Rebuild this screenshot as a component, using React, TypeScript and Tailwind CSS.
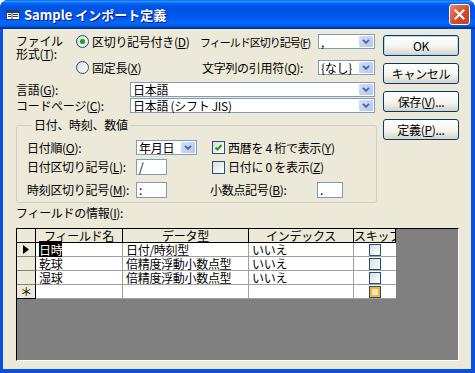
import React from "react";

// XP 風のコントロール
function Radio({ checked }: { checked?: boolean }) {
  return (
    <span className="w-[13px] h-[13px] shrink-0 rounded-full border border-[#1C5180] bg-[linear-gradient(135deg,#DCDCD7,#FFFFFF)] flex items-center justify-center">
      {checked && <span className="w-[5px] h-[5px] rounded-full bg-[#21A121] shadow-[0_0_1px_#7DD67D]" />}
    </span>
  );
}

function Check({ checked }: { checked?: boolean }) {
  return (
    <span className="w-[13px] h-[13px] shrink-0 border border-[#1C5180] bg-[linear-gradient(135deg,#DCDCD7,#FFFFFF)] flex items-center justify-center">
      {checked && (
        <svg width="9" height="9" viewBox="0 0 9 9">
          <polyline points="1.5,4.5 3.5,6.5 7.5,2" fill="none" stroke="#21A121" strokeWidth="2" />
        </svg>
      )}
    </span>
  );
}

function Combo({ className, value }: { className: string; value: string }) {
  return (
    <div className={`${className} h-[15px] shrink-0 border border-[#7F9DB9] bg-white flex items-stretch`}>
      <span className="flex-1 min-w-0 pl-[2px] leading-[13px] whitespace-nowrap">{value}</span>
      <span className="m-[1px] w-[14px] shrink-0 rounded-[1px] bg-[linear-gradient(135deg,#D2DEFC,#B2C6F7)] flex items-center justify-center">
        <svg width="8" height="5" viewBox="0 0 8 5">
          <polyline points="1,0.8 4,3.8 7,0.8" fill="none" stroke="#4D6185" strokeWidth="1.8" />
        </svg>
      </span>
    </div>
  );
}

function Field({ className, value }: { className: string; value: string }) {
  return (
    <div className={`${className} h-[16px] shrink-0 border border-[#7F9DB9] bg-white pl-[2px] leading-[14px]`}>
      {value}
    </div>
  );
}

function Btn({ children, def }: { children: React.ReactNode; def?: boolean }) {
  return (
    <div
      className={`h-[21px] w-[76px] rounded-[3px] border border-[#003C74] bg-[linear-gradient(to_bottom,#FFFFFF,#F4F4F0_55%,#D8D2C6)] flex items-center justify-center leading-[14px] ${
        def ? "shadow-[inset_0_0_0_1px_#BCD4F6]" : ""
      }`}
    >
      {children}
    </div>
  );
}

function SkipBox({ active }: { active?: boolean }) {
  return (
    <span className="w-[12px] h-[12px] border border-[#1C5180] bg-[linear-gradient(135deg,#DCDCD7,#FFFFFF)] flex items-center justify-center">
      {active && <span className="w-[10px] h-[10px] border-2 border-[#F4B23B] bg-[#FCE9B9]" />}
    </span>
  );
}

const rows = [
  { name: "日時", type: "日付/時刻型", idx: "いいえ", current: true },
  { name: "乾球", type: "倍精度浮動小数点型", idx: "いいえ" },
  { name: "湿球", type: "倍精度浮動小数点型", idx: "いいえ" },
];

export default function App() {
  return (
    <div className="w-[475px] h-[373px] flex flex-col rounded-t-[8px] overflow-hidden bg-[#0A50DD] text-black text-[12px] leading-[14px] tracking-[-0.3px] font-['Noto_Sans_CJK_JP','Noto_Sans',sans-serif]">
      {/* タイトルバー */}
      <div className="h-[29px] shrink-0 flex items-center bg-[linear-gradient(to_bottom,#0058EE_0%,#3A93FF_4%,#288EFF_6%,#127DFF_8%,#036FFC_10%,#0262EE_14%,#0057E5_20%,#0054E3_24%,#0055EB_56%,#005BF5_66%,#026AFE_76%,#0062EF_86%,#0052D6_92%,#0040AB_94%,#003092_100%)]">
        <svg className="ml-[6px]" width="14" height="10" viewBox="0 0 14 10">
          <rect x="0.5" y="0.5" width="13" height="9" fill="#FFFFFF" stroke="#2A3E6E" />
          <rect x="1" y="1" width="12" height="2" fill="#2A3E6E" />
          <line x1="2" y1="4.5" x2="5" y2="4.5" stroke="#2A3E6E" />
          <line x1="2" y1="6.5" x2="5" y2="6.5" stroke="#2A3E6E" />
          <line x1="7" y1="4.5" x2="12" y2="4.5" stroke="#2A3E6E" />
          <line x1="7" y1="6.5" x2="12" y2="6.5" stroke="#2A3E6E" />
          <line x1="6" y1="3" x2="6" y2="9" stroke="#2A3E6E" />
        </svg>
        <span className="ml-[4px] text-white font-bold text-[13px] leading-[16px] tracking-[0px] [text-shadow:1px_1px_0_#0A1883]">
          Sample インポート定義
        </span>
        <div className="ml-auto mr-[5px] w-[21px] h-[21px] rounded-[3px] border border-white bg-[linear-gradient(135deg,#E8876A,#D24A22_60%,#C1401F)] flex items-center justify-center">
          <svg width="11" height="11" viewBox="0 0 11 11">
            <path d="M1.5 1.5 L9.5 9.5 M9.5 1.5 L1.5 9.5" stroke="#FFFFFF" strokeWidth="2" strokeLinecap="square" />
          </svg>
        </div>
      </div>

      {/* クライアント領域 */}
      <div className="ml-[3px] mr-[4px] h-[340px] shrink-0 bg-[#ECE9D8] flex flex-col pl-[13px] pt-[5px]">
        <div className="flex items-start">
          <div className="w-[361px] flex flex-col">
            <div className="flex">
              <div className="w-[60px] flex flex-col">
                <div className="h-[13px] leading-[13px]">ファイル</div>
                <div className="h-[13px] leading-[13px]">
                  形式(<u>T</u>):
                </div>
              </div>
              <div className="flex flex-col">
                <div className="flex items-center h-[15px]">
                  <div className="w-[124px] flex items-center">
                    <Radio checked />
                    <span className="ml-[3px]">
                      区切り記号付き(<u>D</u>)
                    </span>
                  </div>
                  <div className="w-[118px] whitespace-nowrap text-[11px] tracking-[-1px]">
                    フィールド区切り記号(<u>F</u>)
                  </div>
                  <Combo className="w-[57px]" value="," />
                </div>
                <div className="flex items-center h-[15px] mt-[11px]">
                  <div className="w-[124px] flex items-center">
                    <Radio />
                    <span className="ml-[3px]">
                      固定長(<u>X</u>)
                    </span>
                  </div>
                  <div className="w-[118px] pl-[2px] whitespace-nowrap">
                    文字列の引用符(<u>Q</u>):
                  </div>
                  <Combo className="w-[57px]" value="{なし}" />
                </div>
              </div>
            </div>

            <div className="flex items-center h-[15px] mt-[7px]">
              <div className="w-[114px]">
                言語(<u>G</u>):
              </div>
              <Combo className="w-[245px]" value="日本語" />
            </div>
            <div className="flex items-center h-[15px] mt-[1px]">
              <div className="w-[114px]">
                コードページ(<u>C</u>):
              </div>
              <Combo className="w-[245px]" value="日本語 (シフト JIS)" />
            </div>

            <fieldset className="mt-[6px] border border-[#D0D0BF] rounded-[3px] pl-[10px] pb-[4px]">
              <legend className="ml-[5px] px-[2px] leading-[12px]">日付、時刻、数値</legend>
              <div className="flex items-center h-[15px] mt-[9px]">
                <div className="w-[109px]">
                  日付順(<u>O</u>):
                </div>
                <Combo className="w-[61px]" value="年月日" />
                <span className="ml-[15px]">
                  <Check checked />
                </span>
                <span className="ml-[3px]">
                  西暦を 4 桁で表示(<u>Y</u>)
                </span>
              </div>
              <div className="flex items-center h-[16px] mt-[4px]">
                <div className="w-[109px]">
                  日付区切り記号(<u>L</u>):
                </div>
                <Field className="w-[31px]" value="/" />
                <span className="ml-[45px]">
                  <Check />
                </span>
                <span className="ml-[3px]">
                  日付に 0 を表示(<u>Z</u>)
                </span>
              </div>
              <div className="flex items-center h-[16px] mt-[7px]">
                <div className="w-[109px]">
                  時刻区切り記号(<u>M</u>):
                </div>
                <Field className="w-[31px]" value=":" />
                <div className="ml-[43px] w-[107px]">
                  小数点記号(<u>B</u>):
                </div>
                <Field className="w-[26px]" value="." />
              </div>
            </fieldset>
          </div>

          <div className="ml-[6px] mt-[1px] flex flex-col gap-[7px]">
            <Btn def>OK</Btn>
            <Btn>キャンセル</Btn>
            <Btn>
              保存(<u>V</u>)...
            </Btn>
            <Btn>
              定義(<u>P</u>)...
            </Btn>
          </div>
        </div>

        <div className="mt-[4px] leading-[12px]">
          フィールドの情報(<u>I</u>):
        </div>

        {/* フィールド一覧 */}
        <div className="mt-[9px] w-[443px] h-[133px] border-t border-l border-t-black border-l-black border-r border-b border-r-white border-b-white bg-[#808080] overflow-hidden">
          <div className="w-[379px] flex flex-col">
            <div className="flex h-[14px] bg-[#ECE9D8] leading-[13px]">
              <div className="w-[19px] border-r border-b border-black" />
              <div className="w-[87px] border-r border-b border-black text-center">フィールド名</div>
              <div className="w-[126px] border-r border-b border-black text-center">データ型</div>
              <div className="w-[105px] border-r border-b border-black text-center">インデックス</div>
              <div className="w-[42px] border-r border-b border-black whitespace-nowrap overflow-hidden">スキップ</div>
            </div>
            {rows.map((r) => (
              <div key={r.name} className="flex h-[14px] leading-[13px]">
                <div className="w-[19px] bg-[#ECE9D8] border-r border-b border-r-black border-b-[#808080] flex items-center justify-center">
                  {r.current && (
                    <svg width="6" height="9" viewBox="0 0 6 9">
                      <polygon points="0,0 6,4.5 0,9" fill="#000" />
                    </svg>
                  )}
                </div>
                <div className="w-[87px] bg-white border-r border-b border-[#A0A0A0] pl-[3px]">
                  {r.current ? <span className="bg-black text-white">{r.name}</span> : r.name}
                </div>
                <div className="w-[126px] bg-white border-r border-b border-[#A0A0A0] pl-[3px] whitespace-nowrap">{r.type}</div>
                <div className="w-[105px] bg-white border-r border-b border-[#A0A0A0] pl-[3px]">{r.idx}</div>
                <div className="w-[42px] bg-white border-b border-[#A0A0A0] flex items-center justify-center">
                  <SkipBox />
                </div>
              </div>
            ))}
            <div className="flex h-[14px] leading-[13px]">
              <div className="w-[19px] bg-[#ECE9D8] border-r border-b border-black flex items-center justify-center">＊</div>
              <div className="w-[87px] bg-white border-r border-b border-[#A0A0A0]" />
              <div className="w-[126px] bg-white border-r border-b border-[#A0A0A0]" />
              <div className="w-[105px] bg-white border-r border-b border-[#A0A0A0]" />
              <div className="w-[42px] bg-white border-b border-[#A0A0A0] flex items-center justify-center">
                <SkipBox active />
              </div>
            </div>
          </div>
        </div>
      </div>
    </div>
  );
}
